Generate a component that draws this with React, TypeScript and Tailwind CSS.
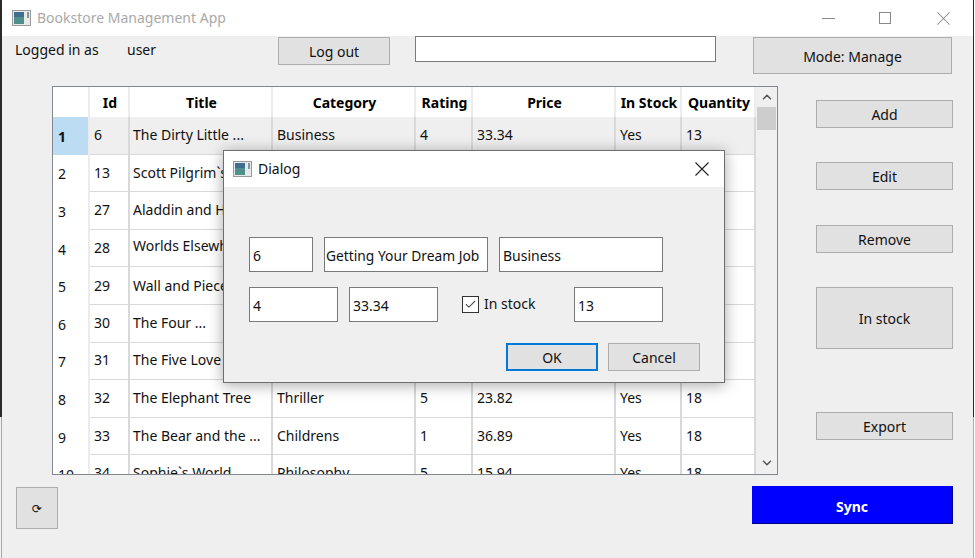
import { Check, ChevronDown, ChevronUp } from 'lucide-react';

const columns = 'grid grid-cols-[37px_40px_143px_143px_57px_143px_66px_74px]';

const headers = ['', 'Id', 'Title', 'Category', 'Rating', 'Price', 'In Stock', 'Quantity'];

const rows = [
  ['1', '6', 'The Dirty Little ...', 'Business', '4', '33.34', 'Yes', '13'],
  ['2', '13', 'Scott Pilgrim`s ...', '', '', '', '', ''],
  ['3', '27', 'Aladdin and His ...', '', '', '', '', ''],
  ['4', '28', 'Worlds Elsewhere', '', '', '', '', ''],
  ['5', '29', 'Wall and Piece', '', '', '', '', ''],
  ['6', '30', 'The Four ...', '', '', '', '', ''],
  ['7', '31', 'The Five Love ...', '', '', '', '', ''],
  ['8', '32', 'The Elephant Tree', 'Thriller', '5', '23.82', 'Yes', '18'],
  ['9', '33', 'The Bear and the ...', 'Childrens', '1', '36.89', 'Yes', '18'],
  ['10', '34', 'Sophie`s World', 'Philosophy', '5', '15.94', 'Yes', '18'],
];

function AppIcon() {
  return (
    <svg width="19" height="16" viewBox="0 0 19 16" className="shrink-0">
      <rect x="0.5" y="0.5" width="18" height="15" fill="#e8eaea" stroke="#9a9a9a" />
      <rect x="2" y="2" width="10" height="12" fill="#4f8f8c" />
      <rect x="2" y="2" width="10" height="5" fill="#3f6f8f" />
      <rect x="15" y="2" width="2" height="6" fill="#7f9a9a" />
    </svg>
  );
}

function CloseIcon({ color, size }: { color: string; size: number }) {
  return (
    <svg width={size} height={size} viewBox="0 0 14 14" className="shrink-0">
      <path d="M0.5 0.5 L13.5 13.5 M13.5 0.5 L0.5 13.5" stroke={color} strokeWidth="1.1" fill="none" />
    </svg>
  );
}

function WinButton({ className, children }: { className: string; children: React.ReactNode }) {
  return (
    <button className={`flex items-center justify-center bg-[#e1e1e1] pt-[2px] text-[#111] ${className}`}>
      {children}
    </button>
  );
}

function TextBox({ className, value }: { className: string; value: string }) {
  return (
    <div className={`flex items-center overflow-hidden whitespace-nowrap border border-[#7a7a7a] bg-white pt-[2px] text-[#111] ${className}`}>
      {value}
    </div>
  );
}

function cellClass(r: number, c: number) {
  if (c === 0) {
    const tone = r === 0 ? 'bg-[#bcdcf4] font-bold' : 'bg-white';
    return `border-r-2 border-[#ececec] pl-[5px] pt-[2px] ${tone}`;
  }
  const left = c === 2 ? 'pl-[3px]' : 'pl-[4px]';
  // row 4's title sits higher than the rest of its row in the screenshot
  const bottom = r === 3 && c === 2 ? 'pb-[4px]' : r < 5 ? '' : 'pb-[1px]';
  return `border-b-[1.5px] border-r-2 border-[#d9d9d9] ${left} ${bottom}`;
}

function BookTable() {
  return (
    <div className="flex h-[389px] w-[726px] overflow-hidden border border-[#828790] bg-white">
      <div className="w-[703px] shrink-0">
        <div className={`${columns} h-[30px] bg-white`}>
          {headers.map((h, i) => (
            <div key={i} className="flex items-center justify-center border-r-2 border-[#ececec] pl-[2px] pt-[1px] font-bold text-black">
              {h}
            </div>
          ))}
        </div>
        {rows.map((row, r) => (
          <div key={r} className={`${columns} h-[37.6px] ${r === 0 ? 'bg-[#efefef]' : 'bg-white'}`}>
            {row.map((cell, c) => (
              <div key={c} className={`flex items-center overflow-hidden whitespace-nowrap text-[#111] ${cellClass(r, c)}`}>
                {cell}
              </div>
            ))}
          </div>
        ))}
      </div>
      <div className="flex w-[21px] flex-col items-center justify-between bg-[#f0f0f0] pb-[4px] pt-[3px]">
        <div className="flex w-full flex-col items-center">
          <ChevronUp className="h-[14px] w-[14px] text-[#555]" strokeWidth={2.5} />
          <div className="mt-[3px] h-[23px] w-[19px] bg-[#cdcdcd]" />
        </div>
        <ChevronDown className="h-[14px] w-[14px] text-[#555]" strokeWidth={2.5} />
      </div>
    </div>
  );
}

function EditDialog() {
  return (
    <div className="absolute left-[223px] top-[150px] h-[233px] w-[502px] border border-[#6e6e6e] bg-[#efefef] shadow-[0_2px_14px_rgba(0,0,0,0.35)]">
      <div className="flex h-[36px] items-center bg-white pl-[9px] pr-[15px] text-[#111]">
        <AppIcon />
        <span className="ml-[6px]">Dialog</span>
        <div className="ml-auto">
          <CloseIcon color="#222" size={14} />
        </div>
      </div>
      <div className="flex flex-col pl-[25px] pt-[50px]">
        <div className="flex gap-[11px]">
          <TextBox className="h-[35px] w-[64px] pl-[3px]" value="6" />
          <TextBox className="h-[35px] w-[164px] pl-[1px] text-[13.8px]" value="Getting Your Dream Job" />
          <TextBox className="h-[35px] w-[164px] pl-[3px]" value="Business" />
        </div>
        <div className="mt-[15px] flex items-center">
          <TextBox className="h-[35px] w-[89px] pl-[3px]" value="4" />
          <TextBox className="ml-[11px] h-[35px] w-[89px] pl-[3px]" value="33.34" />
          <div className="ml-[24px] flex h-[17px] w-[17px] items-center justify-center border border-[#333] bg-white">
            <Check className="h-[13px] w-[13px] text-[#555]" strokeWidth={2} />
          </div>
          <span className="ml-[5px] w-[90px] pb-[2px] text-[#111]">In stock</span>
          <TextBox className="h-[35px] w-[89px] pl-[3px]" value="13" />
        </div>
        <div className="mt-[21px] flex gap-[10px] pl-[257px]">
          <WinButton className="h-[28px] w-[92px] border-2 border-[#0078d7]">OK</WinButton>
          <WinButton className="h-[28px] w-[92px] border border-[#adadad]">Cancel</WinButton>
        </div>
      </div>
    </div>
  );
}

export default function App() {
  return (
    <div className="relative flex h-[558px] w-[975px] flex-col overflow-hidden bg-[#efefef] font-['Noto_Sans',sans-serif] text-[14px] leading-none">
      <div className="flex h-[36px] shrink-0 items-center bg-white pl-[12px] pr-[25px]">
        <AppIcon />
        <span className="ml-[6px] pb-[1px] text-[#a9a9a9]">Bookstore Management App</span>
        <div className="ml-auto h-px w-[13px] bg-[#888]" />
        <div className="ml-[44px] h-[12px] w-[12px] border border-[#888]" />
        <div className="ml-[46px]">
          <CloseIcon color="#999" size={13} />
        </div>
      </div>

      <div className="flex h-[50px] shrink-0 items-start">
        <span className="ml-[15px] mt-[7px] w-[112px] text-[#111]">Logged in as</span>
        <span className="mt-[7px] w-[151px] text-[#111]">user</span>
        <WinButton className="mt-[1px] h-[28px] w-[112px] border border-[#adadad]">Log out</WinButton>
        <div className="ml-[25px] h-[26px] w-[301px] border border-[#7a7a7a] bg-white" />
        <WinButton className="ml-[37px] mt-[1px] h-[37px] w-[199px] border border-[#adadad]">Mode: Manage</WinButton>
      </div>

      <div className="flex h-[389px] shrink-0">
        <div className="ml-[52px]">
          <BookTable />
        </div>
        <div className="ml-[38px] flex w-[137px] flex-col pt-[14px]">
          <WinButton className="h-[28px] border border-[#adadad]">Add</WinButton>
          <WinButton className="mt-[34px] h-[28px] border border-[#adadad]">Edit</WinButton>
          <WinButton className="mt-[35px] h-[28px] border border-[#adadad]">Remove</WinButton>
          <WinButton className="mt-[34px] h-[62px] border border-[#adadad]">In stock</WinButton>
          <WinButton className="mt-[63px] h-[28px] border border-[#adadad]">Export</WinButton>
        </div>
      </div>

      <div className="flex items-start">
        <WinButton className="ml-[16px] mt-[12px] h-[42px] w-[42px] border border-[#adadad] font-['DejaVu_Sans',sans-serif] text-[12px]">⟳</WinButton>
        <button className="ml-[694px] mt-[11px] flex h-[38px] w-[201px] items-center justify-center border-b border-r border-b-[#000080] border-r-[#000080] bg-[#0000ff] pt-[4px] font-bold text-white">
          Sync
        </button>
      </div>

      <EditDialog />

      {/* window edges */}
      <div className="absolute left-0 top-0 h-[417px] w-[2px] bg-[#2a2a2a]" />
      <div className="absolute left-[1px] top-[417px] h-[141px] w-px bg-[#aaaaaa]" />
      <div className="absolute right-0 top-0 h-[558px] w-px bg-white" />
      <div className="absolute right-px top-0 h-[417px] w-px bg-[#2a2a2a]" />
      <div className="absolute right-px top-[417px] h-[141px] w-px bg-[#aaaaaa]" />
    </div>
  );
}
